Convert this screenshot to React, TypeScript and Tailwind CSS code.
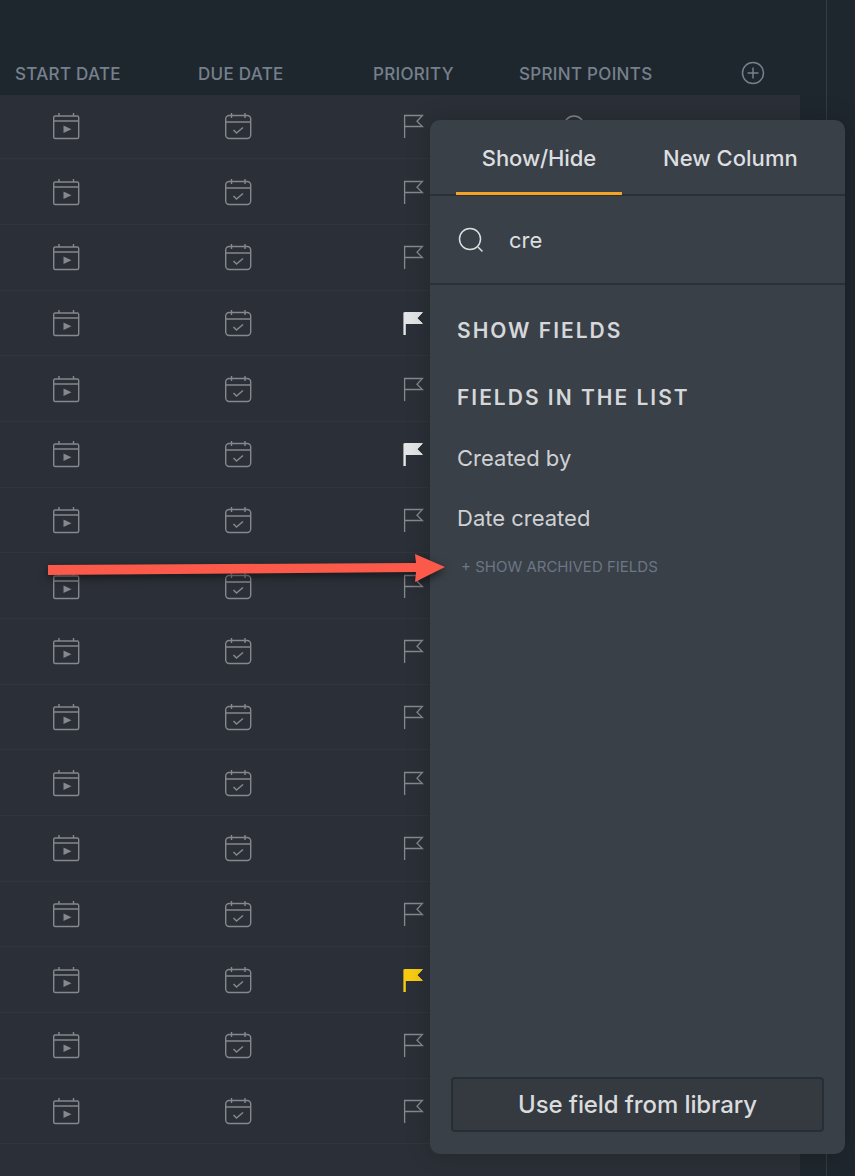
const rowFlags: Array<'none' | 'white' | 'yellow'> = [
  'none', 'none', 'none', 'white', 'none', 'white', 'none', 'none',
  'none', 'none', 'none', 'none', 'none', 'yellow', 'none', 'none',
];

function StartIcon() {
  return (
    <svg width="28" height="28" viewBox="0 0 28 28" fill="none" stroke="#85888c" strokeWidth="1.4">
      <rect x="1.7" y="4" width="25" height="22.5" rx="1.5" />
      <path d="M1.7 9h25M7 1v3M21.5 1v3" />
      <path d="M11.5 13.5l8 3.8-8 3.8z" fill="#85888c" stroke="none" />
    </svg>
  );
}

function DueIcon() {
  return (
    <svg width="28" height="28" viewBox="0 0 28 28" fill="none" stroke="#85888c" strokeWidth="1.4">
      <rect x="1.7" y="3.5" width="25" height="23" rx="3.5" />
      <path d="M1.7 10h25M7.5 1v5M21 1v5" />
      <path d="M9.5 18l3 3 6.5-5.5" strokeWidth="1.5" />
    </svg>
  );
}

function FlagIcon({ kind }: { kind: 'none' | 'white' | 'yellow' }) {
  const color = kind === 'white' ? '#e4e5e7' : kind === 'yellow' ? '#f7cc12' : '#85888c';
  if (kind === 'none') {
    return (
      <svg width="22" height="24" viewBox="0 0 22 24" fill="none" stroke={color} strokeWidth="1.3">
        <path d="M1.6 24V1.5h17.8l-5.4 5.7 5.4 5.3H1.6" />
      </svg>
    );
  }
  return (
    <svg width="22" height="24" viewBox="0 0 22 24" fill={color} stroke={color}>
      <path d="M1.6 24V1.5" strokeWidth="2.4" />
      <path d="M1.6 1.5h17.8l-5.4 5.7 5.4 5.3H1.6z" strokeWidth="1" />
    </svg>
  );
}

function Row({ flag }: { flag: 'none' | 'white' | 'yellow' }) {
  return (
    <div className="grid grid-cols-[132px_212px_140px_180px] h-[65.67px] items-center border-b border-[#31363d]">
      <div className="flex justify-center"><StartIcon /></div>
      <div className="flex justify-center"><DueIcon /></div>
      <div className="flex justify-center"><FlagIcon kind={flag} /></div>
      <div className="flex justify-center">
        <svg width="22" height="22" viewBox="0 0 22 22" fill="none" stroke="#85888c" strokeWidth="1.3">
          <circle cx="11" cy="11" r="10" />
          <path d="M11 5v7" />
        </svg>
      </div>
    </div>
  );
}

export default function App() {
  return (
    <div className="relative flex w-[855px] h-[1176px] overflow-hidden bg-[#1f272e] font-['Inter',sans-serif]">
      <div className="w-[827px] h-full border-r border-[#333b43] flex flex-col">
        {/* Column headers */}
        <div className="h-[95px] shrink-0 pt-[63px] pl-[15px] flex items-start text-[17px] leading-[22px] font-medium tracking-[0.3px] text-[#76808d]">
          <span className="w-[183px]">START DATE</span>
          <span className="w-[175px]">DUE DATE</span>
          <span className="w-[146px]">PRIORITY</span>
          <span className="w-[222px]">SPRINT POINTS</span>
          <svg className="-mt-[2px]" width="24" height="24" viewBox="0 0 24 24" fill="none" stroke="#76808d" strokeWidth="1.5">
            <circle cx="12" cy="12" r="10.5" />
            <path d="M12 6.5v11M6.5 12h11" />
          </svg>
        </div>

        {/* Table rows */}
        <div className="w-[800px] flex-1 bg-[#2b3038] overflow-hidden">
          <div className="-mt-[1.3px]">
            {rowFlags.map((flag, i) => (
              <Row key={i} flag={flag} />
            ))}
          </div>
        </div>
      </div>

      {/* Show/Hide dropdown */}
      <div className="absolute left-[430px] top-[120px] w-[415px] h-[1034px] rounded-[10px] bg-[#3a4047] shadow-[0_0_24px_rgba(0,0,0,0.22)] flex flex-col text-[#dcdee0]">
        <div className="h-[76px] shrink-0 flex border-b-2 border-[#2a3037]">
          <div className="ml-[26px] w-[166px] h-[75px] border-b-[3px] border-[#f5a225] flex items-center justify-center pt-[5px] text-[22px] font-medium tracking-[-0.1px]">
            Show/Hide
          </div>
          <div className="ml-[41px] h-[75px] flex items-center pt-[1px] text-[22px] font-medium tracking-[0.05px]">
            New Column
          </div>
        </div>

        <div className="h-[89px] shrink-0 flex items-center pl-[28px] border-b-2 border-[#2a3037]">
          <svg width="26" height="26" viewBox="0 0 26 26" fill="none" stroke="#dcdee0" strokeWidth="1.5">
            <circle cx="12" cy="12" r="10.5" />
            <path d="M20 20l4.5 4.5" />
          </svg>
          <span className="ml-[25px] pt-[2px] text-[22px] text-[#dcdee0]">cre</span>
        </div>

        <div className="pl-[27px] pt-[33px] flex flex-col items-start">
          <h3 className="text-[21px] leading-[26px] font-semibold tracking-[2px] text-[#d5d7da]">SHOW FIELDS</h3>
          <h3 className="mt-[41px] text-[21px] leading-[26px] font-semibold tracking-[2px] text-[#d5d7da]">FIELDS IN THE LIST</h3>
          <p className="mt-[34px] text-[22px] leading-[26px] text-[#cfd1d4]">Created by</p>
          <p className="mt-[34px] text-[22px] leading-[26px] text-[#cfd1d4]">Date created</p>
          <p className="mt-[27px] ml-[4px] text-[15px] leading-[18px] text-[#6b7686]">+ SHOW ARCHIVED FIELDS</p>
        </div>

        <button className="mt-auto mb-[22px] mx-[21px] h-[55px] shrink-0 rounded-[4px] border-2 border-[#282e35] bg-[#353a41] text-[24px] font-medium tracking-[-0.1px] text-[#d9dbdd]">
          Use field from library
        </button>
      </div>

      {/* Annotation arrow */}
      <svg className="absolute left-[40px] top-[545px] drop-shadow-[0_3px_4px_rgba(0,0,0,0.55)]" width="420" height="50" viewBox="0 0 420 50" fill="#fb5a4b">
        <path d="M8 20l368-2-1-9 30 13-30 15 1-10-368 3z" />
      </svg>
    </div>
  );
}
